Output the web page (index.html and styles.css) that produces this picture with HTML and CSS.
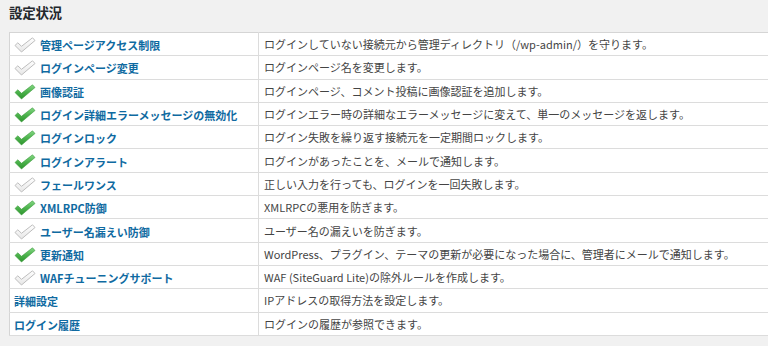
FILE: index.html
```html
<!DOCTYPE html>
<html lang="ja">
<head>
<meta charset="utf-8">
<link rel="stylesheet" href="styles.css">
</head>
<body>
<div class="wrap">
  <h2 class="title">設定状況</h2>
  <table class="status">
    <tr><th><span class="icon off"><svg viewBox="0 0 22 16"><polygon points="1,8.5 3.8,5.8 7.5,9.3 18.5,0.8 21,3.5 7.5,15"/></svg></span><a href="#">管理ページアクセス制限</a></th><td>ログインしていない接続元から管理ディレクトリ（/wp-admin/）を守ります。</td></tr>
    <tr><th><span class="icon off"><svg viewBox="0 0 22 16"><polygon points="1,8.5 3.8,5.8 7.5,9.3 18.5,0.8 21,3.5 7.5,15"/></svg></span><a href="#">ログインページ変更</a></th><td>ログインページ名を変更します。</td></tr>
    <tr><th><span class="icon on"><svg viewBox="0 0 22 16"><polygon points="1,8.5 3.8,5.8 7.5,9.3 18.5,0.8 21,3.5 7.5,15"/></svg></span><a href="#">画像認証</a></th><td>ログインページ、コメント投稿に画像認証を追加します。</td></tr>
    <tr><th><span class="icon on"><svg viewBox="0 0 22 16"><polygon points="1,8.5 3.8,5.8 7.5,9.3 18.5,0.8 21,3.5 7.5,15"/></svg></span><a href="#">ログイン詳細エラーメッセージの無効化</a></th><td>ログインエラー時の詳細なエラーメッセージに変えて、単一のメッセージを返します。</td></tr>
    <tr><th><span class="icon on"><svg viewBox="0 0 22 16"><polygon points="1,8.5 3.8,5.8 7.5,9.3 18.5,0.8 21,3.5 7.5,15"/></svg></span><a href="#">ログインロック</a></th><td>ログイン失敗を繰り返す接続元を一定期間ロックします。</td></tr>
    <tr><th><span class="icon on"><svg viewBox="0 0 22 16"><polygon points="1,8.5 3.8,5.8 7.5,9.3 18.5,0.8 21,3.5 7.5,15"/></svg></span><a href="#">ログインアラート</a></th><td>ログインがあったことを、メールで通知します。</td></tr>
    <tr><th><span class="icon off"><svg viewBox="0 0 22 16"><polygon points="1,8.5 3.8,5.8 7.5,9.3 18.5,0.8 21,3.5 7.5,15"/></svg></span><a href="#">フェールワンス</a></th><td>正しい入力を行っても、ログインを一回失敗します。</td></tr>
    <tr><th><span class="icon on"><svg viewBox="0 0 22 16"><polygon points="1,8.5 3.8,5.8 7.5,9.3 18.5,0.8 21,3.5 7.5,15"/></svg></span><a href="#">XMLRPC防御</a></th><td>XMLRPCの悪用を防ぎます。</td></tr>
    <tr><th><span class="icon off"><svg viewBox="0 0 22 16"><polygon points="1,8.5 3.8,5.8 7.5,9.3 18.5,0.8 21,3.5 7.5,15"/></svg></span><a href="#">ユーザー名漏えい防御</a></th><td>ユーザー名の漏えいを防ぎます。</td></tr>
    <tr><th><span class="icon on"><svg viewBox="0 0 22 16"><polygon points="1,8.5 3.8,5.8 7.5,9.3 18.5,0.8 21,3.5 7.5,15"/></svg></span><a href="#">更新通知</a></th><td>WordPress、プラグイン、テーマの更新が必要になった場合に、管理者にメールで通知します。</td></tr>
    <tr><th><span class="icon off"><svg viewBox="0 0 22 16"><polygon points="1,8.5 3.8,5.8 7.5,9.3 18.5,0.8 21,3.5 7.5,15"/></svg></span><a href="#">WAFチューニングサポート</a></th><td>WAF (SiteGuard Lite)の除外ルールを作成します。</td></tr>
    <tr><th class="plain"><a href="#">詳細設定</a></th><td>IPアドレスの取得方法を設定します。</td></tr>
    <tr><th class="plain"><a href="#">ログイン履歴</a></th><td>ログインの履歴が参照できます。</td></tr>
  </table>
</div>
<svg width="0" height="0" class="defs">
  <defs>
    <linearGradient id="g-on" x1="0" y1="0" x2="0" y2="1">
      <stop offset="0" stop-color="#86d786"/>
      <stop offset="0.5" stop-color="#4cb34c"/>
      <stop offset="1" stop-color="#2e942e"/>
    </linearGradient>
    <linearGradient id="g-off" x1="0" y1="0" x2="0" y2="1">
      <stop offset="0" stop-color="#ffffff"/>
      <stop offset="1" stop-color="#e6e6e6"/>
    </linearGradient>
  </defs>
</svg>
</body>
</html>
```

FILE: styles.css
```css
html, body {
  margin: 0;
  padding: 0;
  background: #f1f1f1;
}
body {
  font-family: "Noto Sans CJK JP", "Noto Sans", sans-serif;
  color: #444;
}
.wrap {
  padding-left: 9px;
}
.title {
  margin: 0;
  padding-top: 3px;
  height: 32px;
  box-sizing: border-box;
  font-size: 13.5px;
  line-height: 18px;
  font-weight: bold;
  color: #23282d;
  letter-spacing: -0.3px;
}
.status {
  border-collapse: collapse;
  background: #fff;
  border: 1px solid #d5d5d5;
  border-right: 0;
  width: 100%;
  font-size: 11px;
}
.status tr {
  height: 23.3px;
}
.status th, .status td {
  border-bottom: 1px solid #dcdcdc;
  padding: 0 4px;
  vertical-align: middle;
  white-space: nowrap;
  line-height: 16px;
}
.status th {
  width: 240px;
  text-align: left;
  font-weight: bold;
  border-right: 1px solid #dcdcdc;
}
.status td {
  padding-left: 5px;
  color: #444;
}
.status a {
  color: #0f6aa1;
  text-decoration: none;
  vertical-align: middle;
}
.icon {
  display: inline-block;
  width: 22px;
  height: 16px;
  margin-right: 4px;
  vertical-align: middle;
}
.icon svg {
  display: block;
  width: 22px;
  height: 16px;
}
.icon.on polygon {
  fill: url(#g-on);
  stroke: #3a9a3a;
  stroke-width: 0.6;
  stroke-linejoin: round;
}
.icon.off polygon {
  fill: url(#g-off);
  stroke: #bdbdbd;
  stroke-width: 1;
  stroke-linejoin: round;
}
.defs {
  position: absolute;
}
```
